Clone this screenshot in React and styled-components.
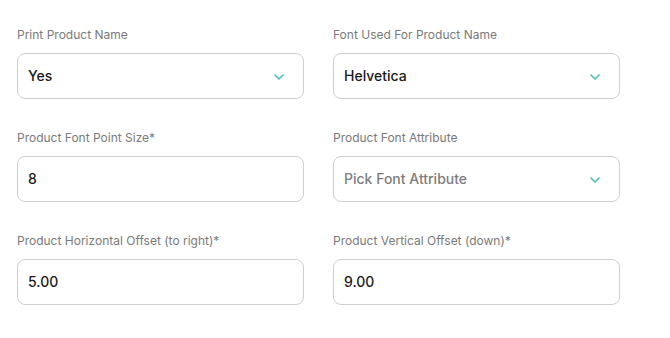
import React from "react"
import styled, { createGlobalStyle } from "styled-components"

const GlobalStyle = createGlobalStyle`
  body {
    margin: 0;
    background: #ffffff;
    font-family: "Inter", "Open Sans", sans-serif;
  }
`

const fields = [
  { label: "Print Product Name", value: "Yes", select: true },
  { label: "Font Used For Product Name", value: "Helvetica", select: true },
  { label: "Product Font Point Size*", value: "8" },
  { label: "Product Font Attribute", placeholder: "Pick Font Attribute", select: true },
  { label: "Product Horizontal Offset (to right)*", value: "5.00" },
  { label: "Product Vertical Offset (down)*", value: "9.00" },
]

function Chevron() {
  return (
    <svg width="10" height="6" viewBox="0 0 10 6" fill="none">
      <path
        d="M1 1l4 4 4-4"
        stroke="#52c3b3"
        strokeWidth="1.7"
        strokeLinecap="round"
        strokeLinejoin="round"
      />
    </svg>
  )
}

export default function App() {
  return (
    <>
      <GlobalStyle />
      <Form>
        {fields.map((f) => (
          <Field key={f.label}>
            <Label>{f.label}</Label>
            <Box>
              <Value muted={!f.value}>{f.value || f.placeholder}</Value>
              {f.select && <Chevron />}
            </Box>
          </Field>
        ))}
      </Form>
    </>
  )
}

const Form = styled.div`
  display: grid;
  grid-template-columns: 287px 287px;
  column-gap: 29px;
  row-gap: 31px;
  padding: 27px 0 0 17px;
`
const Field = styled.div`
  display: flex;
  flex-direction: column;
`
const Label = styled.label`
  font-size: 12px;
  line-height: 16px;
  color: #7a7a7a;
  margin-bottom: 10px;
`
const Box = styled.div`
  display: flex;
  align-items: center;
  justify-content: space-between;
  height: 46px;
  box-sizing: border-box;
  border: 1px solid #cfcfcf;
  border-radius: 8px;
  padding: 1px 19px 0 10px;
`
const Value = styled.span`
  font-size: 14px;
  font-weight: 450;
  line-height: 16px;
  margin-top: -2px;
  color: ${(props) => (props.muted ? "#7d7d7d" : "#1a1a1a")};
`
